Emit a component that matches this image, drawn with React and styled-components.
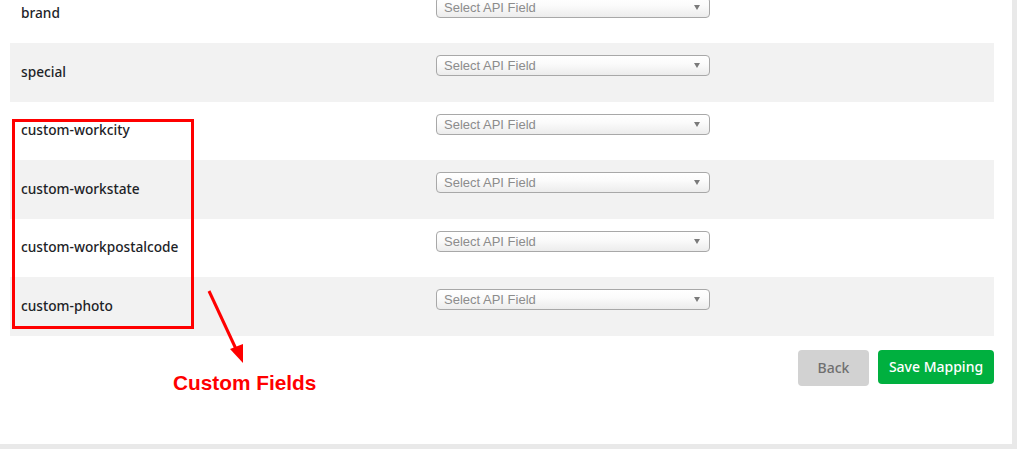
import styled, { createGlobalStyle } from 'styled-components';

const GlobalStyle = createGlobalStyle`
  html, body {
    margin: 0;
    padding: 0;
    background: #e9e9e9;
    overflow: hidden;
  }
  body {
    font-family: "Noto Sans", "Liberation Sans", Arial, sans-serif;
    color: #1d2327;
  }
`;

const Page = styled.div`
  width: 1017px;
  height: 449px;
  overflow: hidden;
`;

const Panel = styled.div`
  position: relative;
  width: 1012px;
  height: 444px;
  background: #fff;
  box-sizing: border-box;
  padding: 0 18px 0 10px;
  overflow: hidden;
`;

const Table = styled.div`
  margin-top: -15.5px;
  display: flex;
  flex-direction: column;
`;

const Row = styled.div`
  display: grid;
  grid-template-columns: 416px 1fr;
  height: 58.5px;
  background: ${(p) => (p.$striped ? '#f2f2f2' : 'transparent')};
`;

const Label = styled.div`
  padding: 19.5px 0 0 11px;
  font-size: 13.7px;
  font-weight: 500;
  line-height: 18px;
  color: #1d2327;
`;

const Cell = styled.div`
  padding: 12px 0 0 10px;
`;

const SelectBox = styled.div`
  width: 274px;
  height: 21px;
  box-sizing: border-box;
  border: 1px solid #a8a8a8;
  border-radius: 4px;
  background: linear-gradient(#ffffff 0%, #fbfbfb 40%, #ececec 100%);
  display: flex;
  align-items: center;
  justify-content: space-between;
  padding: 0 9px 0 7px;
  font-family: "Liberation Sans", Arial, sans-serif;
  font-size: 13px;
  color: #8c8c8c;
`;

const Caret = styled.span`
  width: 0;
  height: 0;
  border-left: 3.5px solid transparent;
  border-right: 3.5px solid transparent;
  border-top: 5px solid #7a7a7a;
`;

const Footer = styled.div`
  display: flex;
  justify-content: flex-end;
  align-items: flex-start;
  gap: 9px;
  margin-top: 14px;
`;

const Button = styled.button`
  border: none;
  border-radius: 4px;
  height: ${(p) => (p.$primary ? '34px' : '36px')};
  width: ${(p) => (p.$primary ? '116px' : '71px')};
  padding: 0;
  font-family: "Noto Sans", "Liberation Sans", Arial, sans-serif;
  font-size: 14px;
  font-weight: 500;
  background: ${(p) => (p.$primary ? '#00b03f' : '#d2d2d2')};
  color: ${(p) => (p.$primary ? '#ffffff' : '#6f6f6f')};
  cursor: pointer;
`;

const Highlight = styled.div`
  position: absolute;
  left: 12px;
  top: 119px;
  width: 182px;
  height: 210px;
  box-sizing: border-box;
  border: 3px solid #ff0000;
`;

const ArrowSvg = styled.svg`
  position: absolute;
  left: 200px;
  top: 285px;
`;

const Note = styled.div`
  position: absolute;
  left: 173px;
  top: 371px;
  font-family: "Liberation Sans", Arial, sans-serif;
  font-weight: 700;
  font-size: 20.8px;
  color: #ff0000;
  white-space: nowrap;
`;

const fields = [
  'brand',
  'special',
  'custom-workcity',
  'custom-workstate',
  'custom-workpostalcode',
  'custom-photo',
];

export default function App() {
  return (
    <Page>
      <GlobalStyle />
      <Panel>
        <Table>
          {fields.map((f, i) => (
            <Row key={f} $striped={i % 2 === 1}>
              <Label>{f}</Label>
              <Cell>
                <SelectBox>
                  <span>Select API Field</span>
                  <Caret />
                </SelectBox>
              </Cell>
            </Row>
          ))}
        </Table>
        <Footer>
          <Button>Back</Button>
          <Button $primary>Save Mapping</Button>
        </Footer>

        <Highlight />
        <ArrowSvg width="60" height="85" viewBox="0 0 60 85">
          <line x1="9" y1="6" x2="36" y2="64" stroke="#ff0000" strokeWidth="3" />
          <polygon points="43,78 30,64 43,59" fill="#ff0000" />
        </ArrowSvg>
        <Note>Custom Fields</Note>
      </Panel>
    </Page>
  );
}
